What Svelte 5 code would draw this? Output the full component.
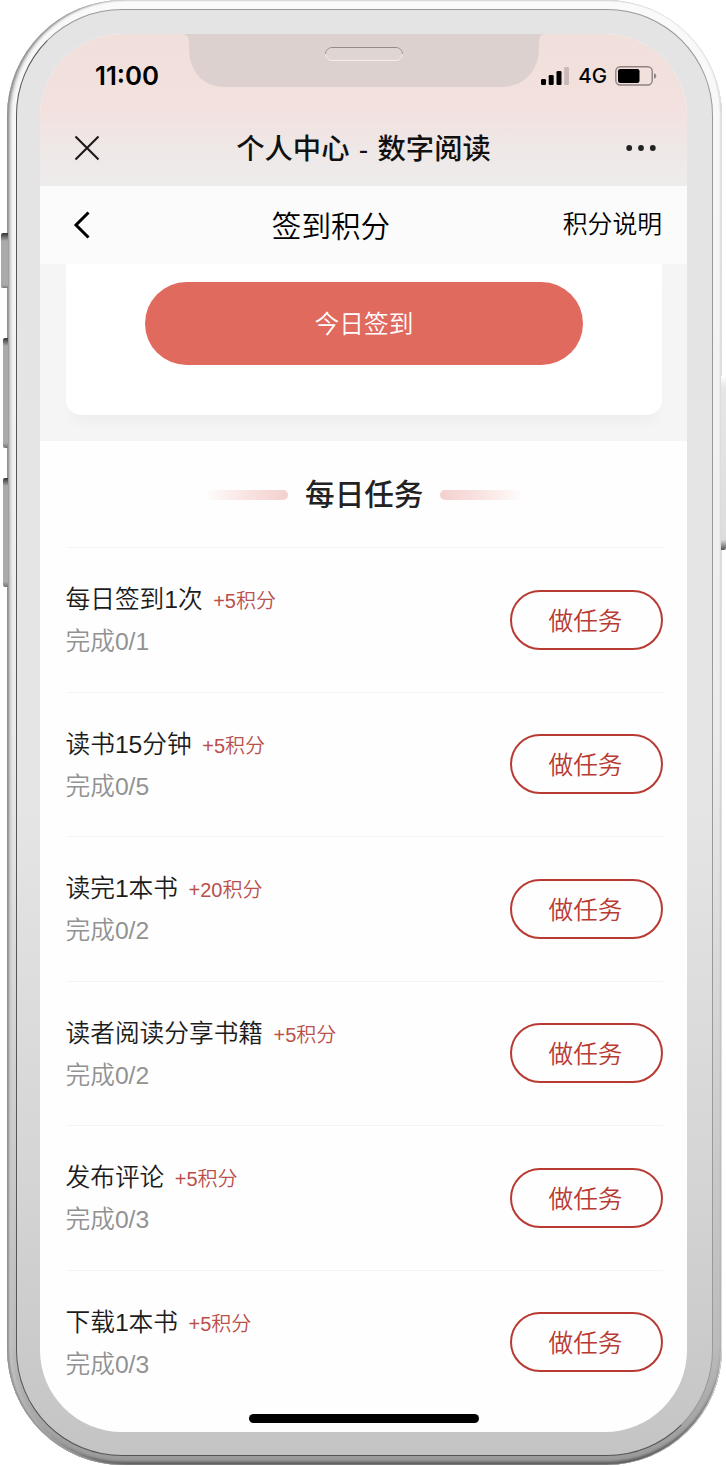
<script lang="ts">
  interface Task {
    name: string
    points: number
    done: number
    total: number
  }

  const tasks: Task[] = [
    { name: '每日签到1次', points: 5, done: 0, total: 1 },
    { name: '读书15分钟', points: 5, done: 0, total: 5 },
    { name: '读完1本书', points: 20, done: 0, total: 2 },
    { name: '读者阅读分享书籍', points: 5, done: 0, total: 2 },
    { name: '发布评论', points: 5, done: 0, total: 3 },
    { name: '下载1本书', points: 5, done: 0, total: 3 },
  ]
</script>

<div class="stage">
  <!-- Hardware keys on the phone's edges -->
  <span class="key mute"></span>
  <span class="key volume-up"></span>
  <span class="key volume-down"></span>
  <span class="key power"></span>

  <div class="phone">
    <div class="bezel">
      <div class="screen">
        <svg class="notch" width="364" height="54" viewBox="0 0 364 54">
          <path d="M0 0H364C360 0 358 3 358 8V14C358 38 342 53 320 53H43C22 53 8 37 8 14V8C8 3 5 0 0 0Z" fill="#ddd1cf" />
          <rect x="144.5" y="13.5" width="77" height="13" rx="6.5" fill="#dfd5d3" stroke="#f4eeec" />
          <path d="M144.5 20a6.5 6.5 0 0 1 6.5-6.5h64a6.5 6.5 0 0 1 6.5 6.5" fill="none" stroke="#978b89" />
        </svg>

        <header class="wechat">
          <div class="status">
            <span class="time">11:00</span>
            <div class="signals">
              <svg width="28" height="20" viewBox="0 0 28 20">
                <rect x="0" y="13" width="5" height="6" rx="1.2" />
                <rect x="7.7" y="9" width="5" height="10" rx="1.2" />
                <rect x="15.5" y="5" width="5" height="14" rx="1.2" />
                <rect x="23.2" y="1" width="4.8" height="18" rx="1.2" fill="#c9b8b8" />
              </svg>
              <span class="network">4G</span>
              <svg width="42" height="20" viewBox="0 0 42 20">
                <rect x=".8" y=".8" width="36.4" height="18.2" rx="4.5" fill="none" stroke="#8f8384" stroke-width="1.4" />
                <rect x="3" y="3" width="21.5" height="14" rx="2.2" />
                <path d="M39 7.2c3 1 3 4.6 0 5.6z" fill="#8f8384" />
              </svg>
            </div>
          </div>

          <div class="bar title-bar">
            <svg width="26" height="26" viewBox="0 0 26 26" fill="none" stroke="#1c1818" stroke-width="2.1">
              <path d="M1.5 1.5l23 23M24.5 1.5l-23 23" />
            </svg>
            <h1>个人中心 - 数字阅读</h1>
            <svg width="30" height="8" viewBox="0 0 30 8" fill="#222">
              <circle cx="3.2" cy="4" r="2.9" />
              <circle cx="15" cy="4" r="2.9" />
              <circle cx="26.8" cy="4" r="2.9" />
            </svg>
          </div>
        </header>

        <nav class="bar page-bar">
          <svg width="18" height="28" viewBox="0 0 18 28" fill="none" stroke="#000" stroke-width="3">
            <path d="M15.5 1.5L3 14l12.5 12.5" />
          </svg>
          <h2>签到积分</h2>
          <span class="rules">积分说明</span>
        </nav>

        <section class="sign-in">
          <div class="card">
            <button class="sign-button" type="button">今日签到</button>
          </div>
        </section>

        <section class="tasks">
          <div class="heading">
            <span class="dash"></span>
            <h3>每日任务</h3>
            <span class="dash right"></span>
          </div>

          {#each tasks as task}
            <div class="task">
              <div class="info">
                <div class="name">
                  <span>{task.name}</span>
                  <span class="points">+{task.points}积分</span>
                </div>
                <div class="progress">完成{task.done}/{task.total}</div>
              </div>
              <button class="go" type="button">做任务</button>
            </div>
          {/each}
        </section>

        <div class="home-indicator"></div>
      </div>
    </div>
  </div>
</div>

<style>
  :global(body) {
    background: #fff;
  }

  .stage {
    position: relative;
    box-sizing: border-box;
    width: 726px;
    height: 1466px;
    padding: 0 4px 1px 7px;
    overflow: hidden;
    font-family: 'Liberation Sans', 'Noto Sans CJK SC', sans-serif;
  }

  /* Phone shell */
  .phone {
    box-sizing: border-box;
    height: 1465px;
    padding: 9px;
    border-radius: 116px;
    background: linear-gradient(180deg, #fafafa, #ececec 50%, #bbb 92%, #999);
    box-shadow:
      inset 2px 0 2px #909090,
      inset 5px 0 3px -1px #c9c9c9,
      inset -1px 0 1px #e4e4e4,
      inset 0 -3px 3px #555;
  }

  .bezel {
    box-sizing: border-box;
    height: 1447px;
    padding: 24px 25px 23px 23px;
    border: 1px solid #555;
    border-top-color: #999;
    border-right-color: #999;
    border-radius: 106px;
    background: linear-gradient(180deg, #e4e4e4, #e5e5e5 55%, #d4d4d4 82%, #c4c4c4);
  }

  .screen {
    position: relative;
    height: 1398px;
    width: 647px;
    overflow: hidden;
    border-radius: 82px;
    background: #fefefe;
  }

  .notch {
    position: absolute;
    top: 0;
    left: 141px;
  }

  .key {
    position: absolute;
    left: 3px;
    width: 5px;
    border-radius: 2px 0 0 2px;
    background: linear-gradient(180deg, #333, #aaa 8px, #aaa 95%, #777);
  }

  .mute {
    top: 233px;
    left: 1px;
    width: 7px;
    height: 55px;
  }

  .volume-up {
    top: 338px;
    height: 110px;
  }

  .volume-down {
    top: 478px;
    height: 109px;
  }

  .power {
    top: 376px;
    left: 721px;
    height: 174px;
    border-radius: 0 2px 2px 0;
    background: linear-gradient(180deg, #fff, #e6e6e6 12px, #ddd 94%, #555);
  }

  /* Status and title bars */
  .wechat {
    height: 152px;
    background: linear-gradient(180deg, #f1dfdb, #f3e1df 50%, #eee8e7 76%, #eeecec);
  }

  .status {
    display: flex;
    align-items: center;
    justify-content: space-between;
    height: 76px;
    padding: 7px 30px 0 55px;
    box-sizing: border-box;
  }

  .time {
    font: 600 25.8px/30px Inter, sans-serif;
  }

  .signals {
    display: flex;
    align-items: center;
  }

  .network {
    margin: 0 8px 0 9px;
    font: 450 20.5px/24px Inter, sans-serif;
  }

  .bar {
    display: grid;
    align-items: center;
    box-sizing: border-box;
  }

  .title-bar {
    grid-template-columns: 77px 1fr 80px;
    height: 76px;
    padding: 0 31px 0 34px;
  }

  .bar > :last-child {
    justify-self: end;
  }

  h1,
  h2,
  h3 {
    margin: 0;
    text-align: center;
    white-space: nowrap;
  }

  h1 {
    padding-top: 2px;
    color: #111;
    font-size: 28.3px;
    font-weight: 500;
    line-height: 38px;
    word-spacing: 1.5px;
  }

  /* The title sits left of centre because the side columns differ */
  .page-bar {
    grid-template-columns: 27px 1fr 100px;
    height: 78px;
    padding: 0 25px 0 33px;
    background: #fbfbfb;
  }

  h2 {
    padding-top: 3px;
    font-size: 29.6px;
    font-weight: 350;
    line-height: 40px;
  }

  .rules {
    font-size: 24.8px;
    font-weight: 350;
    line-height: 36px;
    white-space: nowrap;
  }

  /* Sign-in card */
  .sign-in {
    height: 177px;
    padding: 0 25px 0 26px;
    background: #f5f5f5;
  }

  .card {
    display: flex;
    justify-content: center;
    box-sizing: border-box;
    height: 151px;
    padding-top: 18px;
    border-radius: 0 0 15px 15px;
    background: #fff;
    box-shadow: 0 14px 8px -6px #efefef;
  }

  .sign-button {
    width: 438px;
    height: 83px;
    padding: 0 0 3px;
    border: none;
    border-radius: 42px;
    background: #e06a5e;
    color: #fff;
    font-family: inherit;
    font-size: 24.7px;
    font-weight: 350;
  }

  /* Daily tasks */
  .tasks {
    padding: 0 24px 0 25.5px;
  }

  .heading {
    display: flex;
    align-items: center;
    justify-content: center;
    gap: 17px;
    height: 106px;
    box-sizing: border-box;
    padding-top: 2px;
  }

  h3 {
    color: #222;
    font-size: 29.6px;
    font-weight: 500;
    line-height: 40px;
  }

  .dash {
    width: 84px;
    height: 10px;
    border-radius: 5px;
    background: linear-gradient(270deg, #f3d0ce, #f9e4e2 50%, #fefefe);
  }

  .dash.right {
    transform: scaleX(-1);
  }

  .task {
    display: flex;
    align-items: center;
    justify-content: space-between;
    box-sizing: border-box;
    height: 144.5px;
    border-top: 1px solid #f4f4f4;
  }

  .info {
    padding-top: 1px;
  }

  .name {
    display: flex;
    align-items: baseline;
    gap: 10.5px;
    color: #1c1c1c;
    font-size: 24.7px;
    font-weight: 350;
    line-height: 41px;
  }

  .points {
    color: #b9504c;
    font-size: 20px;
  }

  .progress {
    color: #929292;
    font-size: 24.7px;
    font-weight: 350;
    line-height: 39px;
  }

  .go {
    width: 153px;
    height: 60px;
    padding: 0 2px 2px 0;
    border: 2px solid #b83a33;
    border-radius: 30px;
    background: none;
    color: #b83a33;
    font-family: inherit;
    font-size: 24.7px;
    font-weight: 350;
  }

  .home-indicator {
    position: absolute;
    bottom: 9px;
    left: 209px;
    width: 230px;
    height: 9px;
    border-radius: 5px;
    background: #000;
  }
</style>
